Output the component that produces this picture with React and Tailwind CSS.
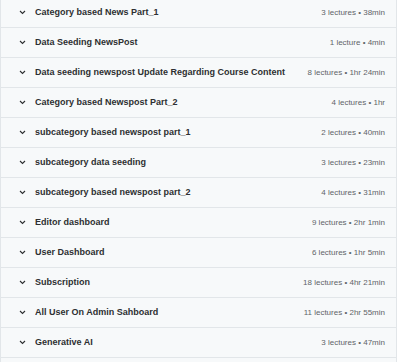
import React from "react";

// Course curriculum sections (collapsed)
const sections = [
  { title: "Category based News Part_1", meta: "3 lectures • 38min" },
  { title: "Data Seeding NewsPost", meta: "1 lecture • 4min" },
  { title: "Data seeding newspost Update Regarding Course Content", meta: "8 lectures • 1hr 24min" },
  { title: "Category based Newspost Part_2", meta: "4 lectures • 1hr" },
  { title: "subcategory based newspost part_1", meta: "2 lectures • 40min" },
  { title: "subcategory data seeding", meta: "3 lectures • 23min" },
  { title: "subcategory based newspost part_2", meta: "4 lectures • 31min" },
  { title: "Editor dashboard", meta: "9 lectures • 2hr 1min" },
  { title: "User Dashboard", meta: "6 lectures • 1hr 5min" },
  { title: "Subscription", meta: "18 lectures • 4hr 21min" },
  { title: "All User On Admin Sahboard", meta: "11 lectures • 2hr 55min" },
  { title: "Generative AI", meta: "3 lectures • 47min" },
];

const Chevron = () => (
  <svg width="7" height="5" viewBox="0 0 7 5" className="shrink-0">
    <path d="M1 1 L3.5 3.5 L6 1" fill="none" stroke="#2d2f31" strokeWidth="1.1" />
  </svg>
);

const SectionRow = ({ title, meta }) => (
  <div className="h-[30px] flex items-center border-b border-[#e2e6e9] pl-[18px] pr-[11px]">
    <Chevron />
    <span className="ml-[9px] flex-1 truncate text-[9px] font-bold text-[#2d2f31]">{title}</span>
    <span className="ml-3 text-[8px] text-[#5f6468] whitespace-nowrap">{meta}</span>
  </div>
);

export default function App() {
  return (
    <div className="w-[400px] h-[362px] overflow-hidden bg-white" style={{ fontFamily: '"Liberation Sans", Arial, sans-serif' }}>
      <div className="w-[397px] -mt-[2px] bg-[#f7f9fa] border-x border-[#e2e6e9]">
        {sections.map((s) => (
          <SectionRow key={s.title} {...s} />
        ))}
        <div className="h-[30px]" />
      </div>
    </div>
  );
}
